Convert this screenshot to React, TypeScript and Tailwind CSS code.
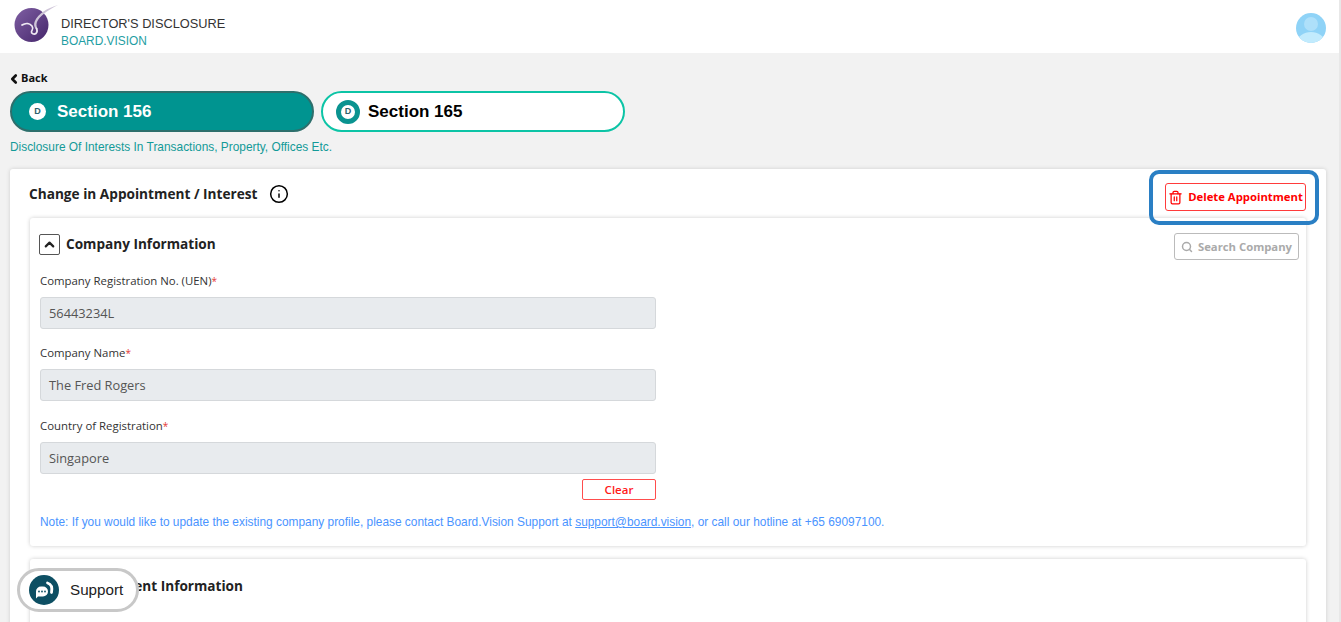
import { ChevronLeft, ChevronUp, Info, Search, Trash2 } from "lucide-react";

const sans = "font-['Open_Sans',sans-serif]";
const arial = "font-['Liberation_Sans',Arial,sans-serif]";

function Logo() {
  return (
    <svg width="46" height="44" viewBox="0 0 46 44" className="block">
      <defs>
        <linearGradient id="orb" x1="0" y1="0" x2="1" y2="1">
          <stop offset="0" stopColor="#7f5fa3" />
          <stop offset="1" stopColor="#45266b" />
        </linearGradient>
      </defs>
      <circle cx="17.5" cy="25" r="17" fill="url(#orb)" />
      {/* swoosh, tapers towards the top right */}
      <path d="M44 5C34 8 24 13 20.5 22c-1 3 0 5 1.200 7l2 0C22 26 22 23 24 20 28 14 36 9 44 5z" fill="#cfc5d8" />
      <path d="M8 25c4-2.500 8-1.500 10 1 2 3 0 4-.5 5.500-.5 2 2.500 3.500 4.500 2 1.500-1.500 1.500-3 .5-5" fill="none" stroke="#efe9f3" strokeWidth="1.700" strokeLinecap="round" />
    </svg>
  );
}

function Avatar() {
  return (
    <svg width="30" height="30" viewBox="0 0 30 30" className="block">
      <defs>
        <clipPath id="avatarClip">
          <circle cx="15" cy="15" r="15" />
        </clipPath>
      </defs>
      <g clipPath="url(#avatarClip)">
        <rect width="30" height="30" fill="#8fd3f7" />
        <circle cx="15" cy="11" r="7" fill="#aee0fa" />
        <path d="M1 30c0-7 7-11 14-11s14 4 14 11z" fill="#c2ebfd" />
      </g>
    </svg>
  );
}

function SupportIcon() {
  return (
    <svg width="30" height="30" viewBox="0 0 30 30" className="block">
      <circle cx="15" cy="15" r="15" fill="#0d4f63" />
      <path d="M7 16.500a5 5 0 0 1 5-5h2a5 5 0 0 1 0 10h-5l-2 2z" fill="#fff" />
      <circle cx="10" cy="16.500" r="0.9" fill="#0d4f63" />
      <circle cx="13" cy="16.500" r="0.9" fill="#0d4f63" />
      <circle cx="16" cy="16.500" r="0.9" fill="#0d4f63" />
      <path d="M18.500 8c3.500 1 5 4.500 4 9.500" fill="none" stroke="#fff" strokeWidth="2.800" strokeLinecap="round" />
    </svg>
  );
}

function Field({ label, value, gap }: { label: string; value: string; gap: string }) {
  return (
    <div className={gap}>
      <div className="text-[11.4px] leading-[16px] text-[#333]">
        {label}
        <span className="text-[10px] text-[#e53935]">*</span>
      </div>
      <div className="mt-[8px] flex h-[32px] w-[616px] items-center rounded-[3px] border border-[#d5d8db] bg-[#e8ebee] px-[8px] pt-[1px] text-[12.8px] text-[#555]">
        {value}
      </div>
    </div>
  );
}

export default function App() {
  return (
    <div className={`relative h-[622px] w-[1341px] overflow-hidden bg-[#f2f2f2] ${sans}`}>
      {/* Header */}
      <header className="flex h-[53px] w-[1339px] items-center justify-between bg-white px-[14px]">
        <div className="flex h-full items-start">
          <Logo />
          <div className={`ml-[1px] mt-[15px] ${arial}`}>
            <div className="text-[12.8px] leading-[17px] text-[#333]">DIRECTOR'S DISCLOSURE</div>
            <div className="mt-[1px] text-[11.9px] leading-[16px] text-[#1f9ea3]">BOARD.VISION</div>
          </div>
        </div>
        <div className="mr-[-1px] mt-[2px]">
          <Avatar />
        </div>
      </header>

      <div className="pl-[10px] pr-[15px]">
        <button className="mt-[18px] flex h-[15px] items-center text-[11px] font-bold text-[#111]">
          <ChevronLeft size={14} strokeWidth={4.5} className="ml-[-3px]" />
          <span>Back</span>
        </button>

        {/* Section tabs */}
        <div className={`mt-[5px] flex gap-[7px] ${arial}`}>
          <div className="flex h-[41px] w-[304px] items-center rounded-full border-2 border-[#2d6f6c] bg-[#009490] pl-[17px]">
            <div className="flex h-[17px] w-[17px] items-center justify-center rounded-full bg-white text-[9px] font-bold text-[#2d5f6b]">
              D
            </div>
            <span className="ml-[11px] text-[17px] font-bold text-white">Section 156</span>
          </div>
          <div className="flex h-[41px] w-[304px] items-center rounded-full border-2 border-[#0cc4a6] bg-white pl-[13px]">
            <div className="flex h-[24px] w-[24px] items-center justify-center rounded-full border-[5px] border-[#0a9390] bg-white text-[9px] font-bold text-[#2d5f6b]">
              D
            </div>
            <span className="ml-[8px] text-[17px] font-bold text-black">Section 165</span>
          </div>
        </div>

        <div className={`mt-[7px] text-[11.9px] leading-[16px] text-[#139a98] ${arial}`}>
          Disclosure Of Interests In Transactions, Property, Offices Etc.
        </div>

        {/* Main card */}
        <div className="mt-[14px] rounded-[3px] bg-white px-[20px] shadow-[0_0_4px_rgba(0,0,0,0.15)]">
          <div className="flex h-[49px] items-start justify-between">
            <div className="ml-[-1px] mt-[14px] flex items-center">
              <span className="text-[13.65px] font-bold leading-[21px] text-[#222]">Change in Appointment / Interest</span>
              <Info size={20} strokeWidth={1.8} className="ml-[11px] text-black" />
            </div>
            <button className="mt-[14px] flex h-[28px] w-[141px] items-center justify-center whitespace-nowrap rounded-[3px] border border-[#ff3b3b] text-[11.3px] font-bold text-[#ff0000]">
              <Trash2 size={15} strokeWidth={2} className="mr-[5px] shrink-0" />
              Delete Appointment
            </button>
          </div>

          {/* Company Information */}
          <section className="h-[328px] rounded-[3px] bg-white pl-[10px] pr-[7px] shadow-[0_0_4px_rgba(0,0,0,0.2)]">
            <div className="flex h-[54px] items-start justify-between">
              <div className="mt-[16px] flex items-center">
                <div className="ml-[-1px] flex h-[21px] w-[21px] items-center justify-center rounded-[2px] border border-[#555]">
                  <ChevronUp size={15} strokeWidth={3.5} className="text-[#222]" />
                </div>
                <span className="ml-[6px] text-[13.6px] font-bold text-[#222]">Company Information</span>
              </div>
              <button className="mt-[15px] flex h-[27px] w-[125px] items-center justify-center whitespace-nowrap rounded-[3px] border border-[#bbb] pt-[1px] text-[11.3px] font-bold text-[#aaa]">
                <Search size={12} strokeWidth={3} className="mr-[5px] shrink-0" />
                Search Company
              </button>
            </div>

            <Field label="Company Registration No. (UEN)" value="56443234L" gap="mt-[1px]" />
            <Field label="Company Name" value="The Fred Rogers" gap="mt-[16px]" />
            <Field label="Country of Registration" value="Singapore" gap="mt-[17px]" />

            <div className="flex w-[616px] justify-end">
              <button className="mt-[5px] h-[21px] w-[74px] rounded-[2px] border border-[#ff4d4d] text-[11.5px] font-semibold leading-none text-[#ff1a1a]">
                Clear
              </button>
            </div>

            <p className={`mt-[14px] text-[11.9px] leading-[16px] text-[#4a94ff] ${arial}`}>
              Note: If you would like to update the existing company profile, please contact Board.Vision Support at{" "}
              <span className="underline">support@board.vision</span>, or call our hotline at +65 69097100.
            </p>
          </section>

          {/* Appointment Information */}
          <section className="mt-[13px] h-[120px] rounded-[3px] bg-white pl-[37px] pt-[14px] shadow-[0_0_4px_rgba(0,0,0,0.2)]">
            <span className="text-[13.6px] font-bold leading-[20px] text-[#222]">Appointment Information</span>
          </section>
        </div>
      </div>

      {/* Scrollbar edge */}
      <div className="absolute right-0 top-0 h-full w-[2px] bg-[#e8e8e8]" />

      {/* Tutorial highlight */}
      <div className="absolute left-[1149px] top-[170px] h-[55px] w-[170px] rounded-[10px] border-[4px] border-[#2a7fc4]" />

      {/* Support button */}
      <div className="absolute left-[17px] top-[568px] flex h-[44px] w-[122px] items-center rounded-full border-[3px] border-[#c8c8c8] bg-white pl-[9px]">
        <SupportIcon />
        <span className={`ml-[11px] mt-[1px] text-[15.2px] text-[#222] ${arial}`}>Support</span>
      </div>
    </div>
  );
}
